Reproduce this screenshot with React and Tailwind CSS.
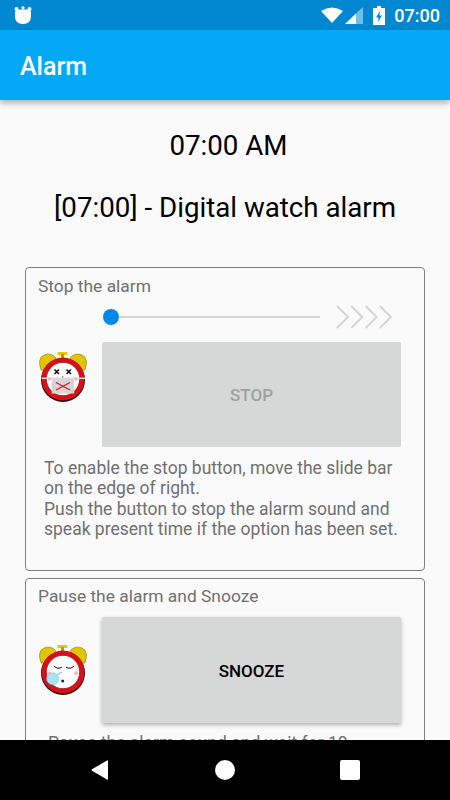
function BearIcon() {
  return (
    <svg width="18" height="18" viewBox="0 0 18 18" className="fill-white">
      <circle cx="2.5" cy="3" r="2" />
      <circle cx="9" cy="1.8" r="1.6" />
      <circle cx="15.5" cy="3" r="2" />
      <path d="M1 7 Q1 3.5 4 3.5 H14 Q17 3.5 17 7 V10 Q17 18 9 18 Q1 18 1 10 Z" />
    </svg>
  );
}

function StatusIcons() {
  return (
    <div className="flex items-center">
      <svg width="22" height="16" viewBox="0 0 22 16" className="fill-white">
        <path d="M0 4 Q11 -3 22 4 L11 16 Z" />
      </svg>
      <svg width="18" height="17" viewBox="0 0 18 17" className="ml-[2px]">
        <path d="M0 17 L18 0 V17 Z" fill="#ffffff" fillOpacity="0.45" />
        <path d="M0 17 L11 6.6 V17 Z" fill="#ffffff" />
      </svg>
      <svg width="12" height="19" viewBox="0 0 12 19" className="ml-[10px] fill-white">
        <path fillRule="evenodd" d="M4 0 H8 V2 H12 V19 H0 V2 H4 Z M7 5 L3 11.5 H5.5 L5 16 L9 9.5 H6.5 Z" />
      </svg>
    </div>
  );
}

function Clock({ children }) {
  return (
    <svg width="50" height="54" viewBox="0 0 50 54" className="shrink-0">
      <rect x="19.5" y="0" width="10" height="3" rx="1" fill="#e8c800" />
      <rect x="23" y="2" width="3" height="4" fill="#b89c00" />
      <path d="M3 18 Q-1 6 6 3 Q13 0 18 6 L20 20 Z" fill="#e3c400" stroke="#7a6800" strokeWidth="0.5" />
      <path d="M47 18 Q51 6 44 3 Q37 0 32 6 L30 20 Z" fill="#e3c400" stroke="#7a6800" strokeWidth="0.5" />
      <circle cx="25" cy="28" r="22" fill="#1c0c0c" />
      <circle cx="25" cy="27" r="21.5" fill="#d80f18" />
      <circle cx="25" cy="27" r="16.7" fill="#ffffff" stroke="#a00c12" strokeWidth="0.8" />
      {children}
    </svg>
  );
}

function DeadFace() {
  return (
    <>
      <path d="M16.5 17.5 L21 22 M21 17.5 L16.5 22 M28.5 17.5 L33 22 M33 17.5 L28.5 22" stroke="#111" strokeWidth="1.5" />
      <circle cx="24.7" cy="25" r="0.7" fill="#333" />
      <rect x="3.5" y="25.5" width="43.5" height="1.6" fill="#d9d9d9" />
      <rect x="13.7" y="27" width="22.5" height="14.5" fill="#d5d5d5" />
      <path d="M18 30.5 L32 38 M32 30.5 L18 38" stroke="#d8141c" strokeWidth="1.2" />
      <circle cx="11.3" cy="27" r="1.8" fill="#f7b7c3" />
      <circle cx="38" cy="27" r="1.8" fill="#f7b7c3" />
    </>
  );
}

function SleepFace() {
  return (
    <>
      <path d="M16 21 Q20 25 24 22 M28 22 Q32 25 36 21" fill="none" stroke="#111" strokeWidth="1" />
      <circle cx="11.3" cy="28.3" r="2" fill="#f7b7c3" />
      <circle cx="38" cy="28.3" r="2" fill="#f7b7c3" />
      <path d="M19 30 L24 27" stroke="#3aa8c8" strokeWidth="0.8" />
      <circle cx="14.7" cy="33.7" r="6" fill="#a6e4f2" stroke="#6cc4dc" strokeWidth="0.5" />
      <circle cx="24.7" cy="36" r="1.5" fill="#222" />
    </>
  );
}

export default function App() {
  return (
    <div className="flex h-[800px] w-[450px] flex-col overflow-hidden bg-[#fafafa] font-['Roboto',sans-serif]">
      <div className="flex h-[30px] shrink-0 items-center justify-between bg-[#0288d1] pl-[14px] pr-[10px]">
        <BearIcon />
        <div className="flex items-center gap-[9px]">
          <StatusIcons />
          <span className="text-[18px] font-medium text-white">07:00</span>
        </div>
      </div>

      <header className="z-10 flex h-[70px] shrink-0 items-center bg-[#03a9f4] px-[20px] pt-[3px] shadow-[0_3px_6px_rgba(0,0,0,0.3)]">
        <h1 className="text-[25px] font-medium text-white">Alarm</h1>
      </header>

      <main className="min-h-0 flex-1 overflow-hidden px-[25px]">
        <p className="mt-[29px] pl-[7px] text-center text-[27.7px] leading-[34px] text-black">07:00 AM</p>
        <p className="mt-[28px] text-center text-[27.7px] leading-[34px] text-black">[07:00] - Digital watch alarm</p>

        <section className="mt-[42px] h-[304px] rounded-[4px] border border-[#808080] px-[12px] pt-[8px]">
          <h2 className="text-[17.4px] leading-[20px] text-[#707070]">Stop the alarm</h2>
          <div className="ml-[65px] mt-[9px] flex h-[24px] items-center">
            <span className="h-[16px] w-[16px] rounded-full bg-[#0288e8]" />
            <span className="h-[2px] w-[201px] bg-[#d6d6d6]" />
            <svg width="58" height="24" viewBox="0 0 58 24" className="ml-[15px]" fill="none" stroke="#d4d6d6" strokeWidth="2">
              <path d="M2 1 L13 12 L2 23 M16.3 1 L27.3 12 L16.3 23 M30.6 1 L41.6 12 L30.6 23 M44.9 1 L55.9 12 L44.9 23" />
            </svg>
          </div>
          <div className="mt-[13px] flex items-start">
            <div className="mt-[10px] shrink-0">
              <Clock><DeadFace /></Clock>
            </div>
            <button className="ml-[14px] h-[105px] w-[299px] rounded-[2px] bg-[#d6d7d7] pt-[2px] text-[17px] font-medium text-[#a0a0a0]">STOP</button>
          </div>
          <p className="ml-[6px] mt-[11px] text-[17.5px] leading-[20.3px] text-[#707070]">
            To enable the stop button, move the slide bar on the edge of right.
            <br />
            Push the button to stop the alarm sound and speak present time if the option has been set.
          </p>
        </section>

        <section className="mt-[7px] rounded-[4px] border border-[#808080] px-[12px] pt-[7px]">
          <h2 className="text-[17.4px] leading-[20px] text-[#707070]">Pause the alarm and Snooze</h2>
          <div className="mt-[11px] flex items-center">
            <div className="mt-[3px] shrink-0">
              <Clock><SleepFace /></Clock>
            </div>
            <button className="ml-[14px] h-[106px] w-[299px] rounded-[2px] bg-[#d6d7d7] pt-[4px] text-[17px] font-medium text-black shadow-[0_2px_4px_rgba(0,0,0,0.3)]">SNOOZE</button>
          </div>
          <p className="ml-[10px] mt-[10px] text-[17.5px] leading-[20px] text-[#707070]">Pause the alarm sound and wait for 10 minutes.</p>
        </section>
      </main>

      <nav className="flex h-[60px] shrink-0 items-center bg-black pl-[91px]">
        <svg width="18" height="20" viewBox="0 0 18 20" className="fill-white">
          <path d="M17 1 V19 Q17 20 16 19.5 L1 10.7 Q0 10 1 9.3 L16 .5 Q17 0 17 1 Z" />
        </svg>
        <span className="ml-[106px] h-[20px] w-[20px] rounded-full bg-white" />
        <span className="ml-[105px] h-[20px] w-[20px] rounded-[2px] bg-white" />
      </nav>
    </div>
  );
}
